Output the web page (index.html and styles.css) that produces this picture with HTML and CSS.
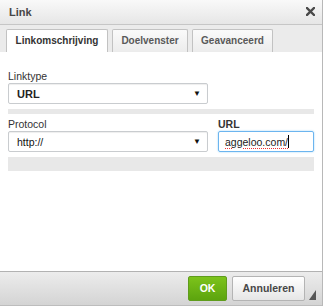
FILE: index.html
```html
<!DOCTYPE html>
<html>
<head>
<meta charset="utf-8">
<link rel="stylesheet" href="styles.css">
</head>
<body>
<div class="dialog">
  <div class="title">
    <span class="title-text">Link</span>
    <svg class="close" width="9" height="9" viewBox="0 0 9 9"><path d="M1 1 L8 8 M8 1 L1 8" stroke="#4a4a4a" stroke-width="2.4" stroke-linecap="square"/></svg>
  </div>
  <div class="tabs">
    <div class="tab active">Linkomschrijving</div>
    <div class="tab">Doelvenster</div>
    <div class="tab">Geavanceerd</div>
  </div>
  <div class="body">
    <div class="label">Linktype</div>
    <div class="select wide"><span class="val">URL</span><span class="arrow">&#9660;</span></div>
    <div class="bar thin"></div>
    <div class="row">
      <div class="col">
        <div class="label">Protocol</div>
        <div class="select wide"><span class="proto">http://</span><span class="arrow">&#9660;</span></div>
      </div>
      <div class="col">
        <div class="label bold">URL</div>
        <div class="input"><span class="typed">aggeloo.com/</span><span class="caret"></span></div>
      </div>
    </div>
    <div class="bar thick"></div>
  </div>
  <div class="footer">
    <div class="btn ok">OK</div>
    <div class="btn cancel">Annuleren</div>
    <svg class="resize" width="7" height="10" viewBox="0 0 7 10"><path d="M7 0 L7 10 L0 10 Z" fill="#555"/></svg>
  </div>
</div>
</body>
</html>
```
FILE: styles.css
```css
html, body {
  margin: 0;
  padding: 0;
  background: #fff;
}
body {
  width: 325px;
  height: 308px;
  font-family: "Liberation Sans", Arial, sans-serif;
  font-size: 10.5px;
  color: #333;
}
.dialog {
  width: 322px;
  border-right: 1px solid #b8b8b8;
  display: flex;
  flex-direction: column;
}
.title {
  height: 24px;
  border-bottom: 1px solid #c6c6c6;
  background: linear-gradient(#f9f9f9, #e6e6e6);
  display: flex;
  align-items: center;
  justify-content: space-between;
  padding: 0 7px 0 9px;
}
.title-text {
  font-weight: bold;
  font-size: 11px;
  color: #474747;
}
.close {
  display: block;
  margin-top: -1px;
}
.tabs {
  height: 27px;
  box-sizing: border-box;
  background: #ebebeb;
  padding: 4px 0 0 6px;
  display: flex;
  gap: 4px;
  align-items: flex-end;
}
.tab {
  height: 23px;
  box-sizing: border-box;
  border: 1px solid #c2c2c2;
  border-bottom: none;
  border-radius: 2px 2px 0 0;
  background: linear-gradient(#fafafa, #ececec);
  line-height: 22px;
  font-weight: bold;
  font-size: 10px;
  color: #595959;
  text-align: center;
}
.tab.active {
  background: #fff;
  color: #333;
  width: 102px;
}
.tab:nth-child(2) { width: 76px; }
.tab:nth-child(3) { width: 81px; }
.body {
  height: 219px;
  box-sizing: border-box;
  background: #fff;
  padding: 17px 8px 0 8px;
}
.label {
  line-height: 14px;
  color: #333;
}
.label.bold {
  font-weight: bold;
}
.select {
  height: 21px;
  box-sizing: border-box;
  border: 1px solid #c9cccf;
  border-radius: 2px;
  box-shadow: inset 0 1px 1px #eee;
  display: flex;
  align-items: center;
  justify-content: space-between;
  padding: 0 6px 0 8px;
  font-size: 11px;
  color: #111;
}
.select .val {
  font-weight: bold;
  color: #222;
}
.select.wide {
  width: 200px;
}
.select .proto {
  font-size: 10.5px;
}
.arrow {
  font-size: 8px;
  color: #111;
}
.bar {
  background: #e8e8e8;
  width: 306px;
}
.bar.thin {
  height: 5px;
  margin-top: 5px;
}
.bar.thick {
  height: 14px;
  margin-top: 5px;
}
.row {
  display: flex;
  gap: 10px;
  margin-top: 3px;
}
.input {
  width: 96px;
  height: 21px;
  box-sizing: border-box;
  border: 1px solid #6cb5ef;
  border-radius: 2px;
  box-shadow: 0 0 2px #9ad0f7;
  display: flex;
  align-items: center;
  padding: 0 0 0 6px;
  font-size: 10.5px;
  color: #222;
}
.typed {
  text-decoration: underline dotted #e33;
  text-decoration-thickness: 1px;
  text-underline-offset: 2px;
}
.caret {
  width: 1px;
  height: 13px;
  background: #000;
}
.footer {
  height: 35px;
  box-sizing: border-box;
  border-top: 1px solid #b2b2b2;
  border-bottom: 1px solid #bdbdbd;
  background: linear-gradient(#ececec, #d4d4d4);
  display: flex;
  justify-content: flex-end;
  align-items: flex-start;
  gap: 5px;
  padding: 4px 17px 0 0;
  position: relative;
}
.btn {
  height: 25px;
  box-sizing: border-box;
  border-radius: 2px;
  line-height: 23px;
  text-align: center;
  font-weight: bold;
  font-size: 10.5px;
}
.ok {
  width: 39px;
  border: 1px solid #5f9c1c;
  background: linear-gradient(#7cc31b, #5ca40e);
  color: #fff;
}
.cancel {
  width: 73px;
  border: 1px solid #b4b4b4;
  background: linear-gradient(#ffffff, #e6e6e6);
  color: #474747;
}
.resize {
  position: absolute;
  right: 6px;
  top: 18px;
}
```
